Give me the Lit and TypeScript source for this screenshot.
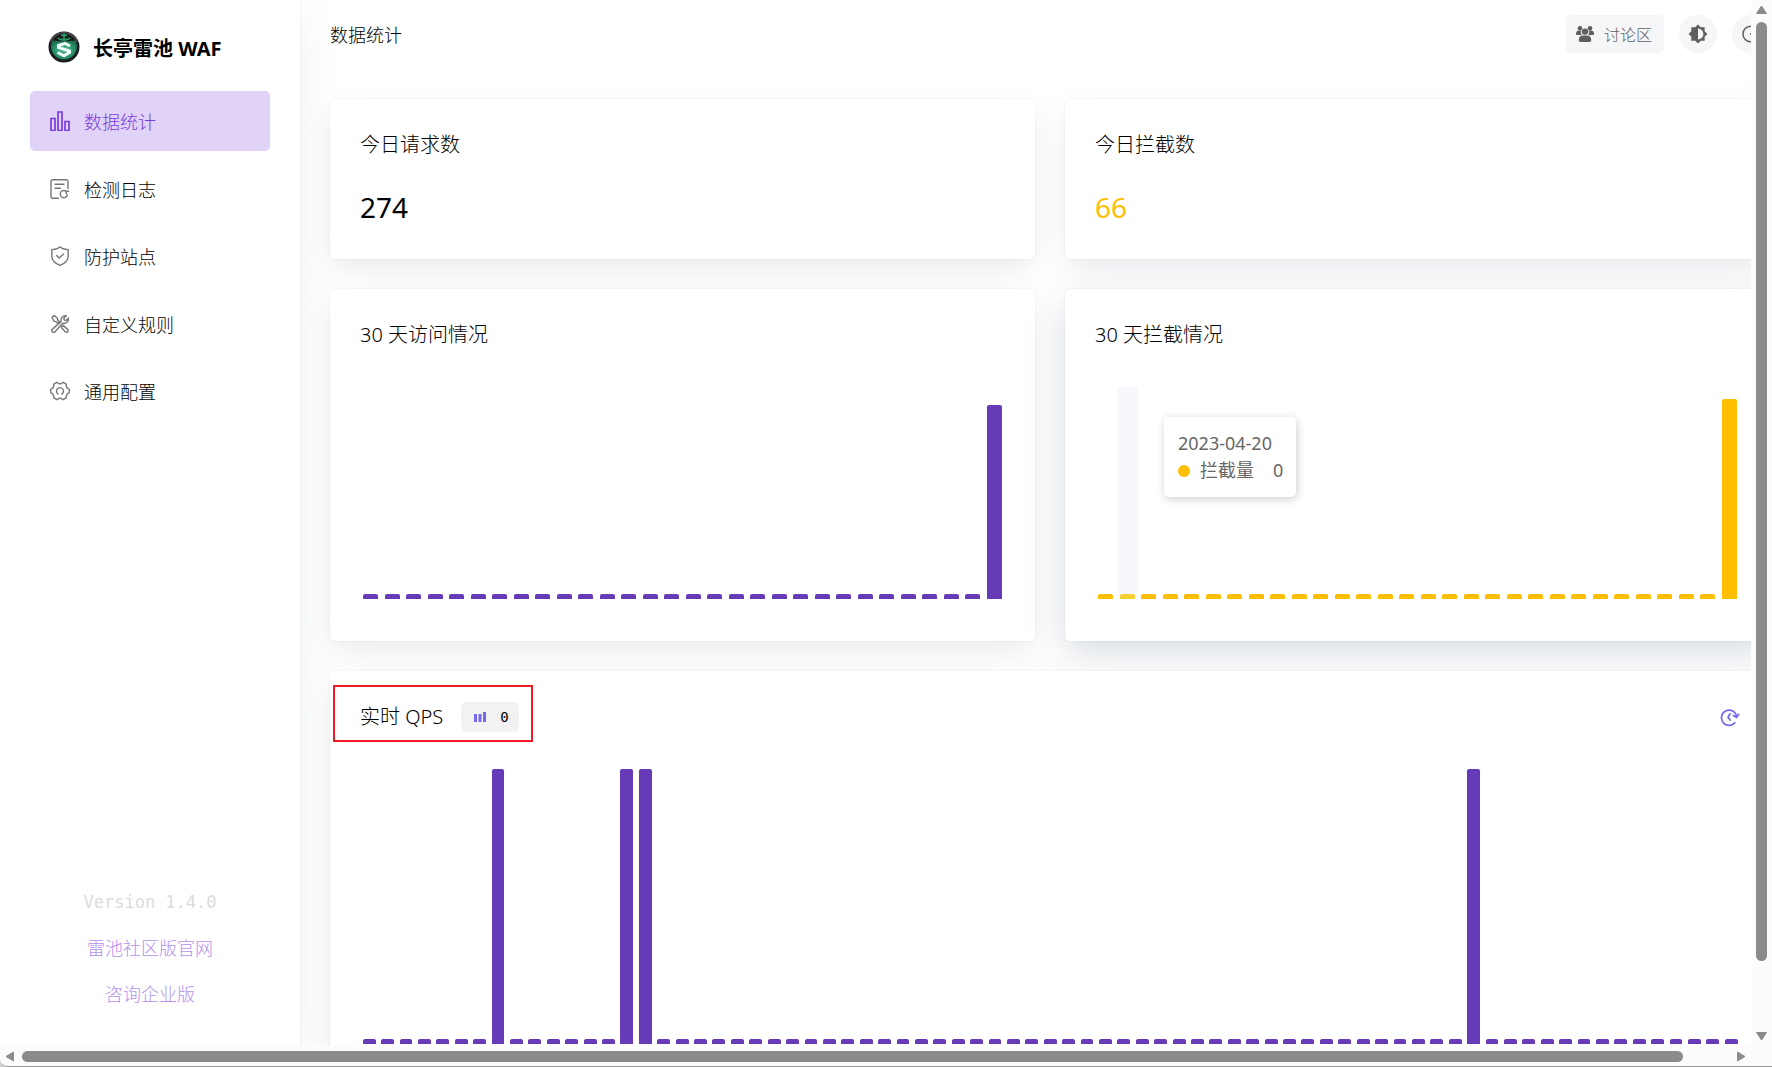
import { LitElement, html, css, svg } from "lit";
import { customElement, property } from "lit/decorators.js";
import { classMap } from "lit/directives/class-map.js";
import { styleMap } from "lit/directives/style-map.js";

const icons = {
  stats: svg`<path d="M1 7.500h4v12H1zM8 1h4v18.500H8zM15 10.500h4v9h-4z" stroke-width="1.700"/>`,
  logs: svg`<path d="M8.500 19.200H2.500a1.500 1.500 0 0 1-1.500-1.500V2.300A1.500 1.500 0 0 1 2.500.8h14A1.500 1.500 0 0 1 18 2.300V9.500M5 5.200h9M5 9.200h5.500"/><path d="M16.500 12.700a3.600 3.600 0 1 0 .8 3.300M18.700 12.200h-2.400v2.600"/>`,
  shield: svg`<path d="M10 .9 12.300 2.300C14 3.100 16 3.500 18.200 3.600V10c0 4.500-3.600 7.600-8.200 9.300C5.400 17.600 1.800 14.500 1.800 10V3.600C4 3.500 6 3.100 7.700 2.300z"/><path d="m6.600 9.600 2.600 2.500 4.400-4.200"/>`,
  tools: svg`<path d="M2 3.200 4 1.400 7.300 4 7.700 6 9.600 8 8 9.500 6 7.600 4 7.300z"/><path d="M2 17.500c-.6-.9-.4-1.700.4-2.400L11 7.600C10.400 4.400 12.600 1 16.300 1.700L13.800 4.300 14.300 6.100 16 6.500 18.500 4c.6 3.600-2.600 6.100-5.900 5.300L5 17.700c-.9 1-2.200.9-3-.2z"/><path d="m11.200 13.300 1.900-1.900 4.600 4c1.600 1.500-.8 3.900-2.400 2.400z"/>`,
  config: svg`<path d="M6.900 1.300 8.300 2.300c1 .6 2.400.6 3.400 0L13.100 1.300 16.200 3.100 16.300 4.900c.1 1.300.7 2.200 1.800 2.800L19.300 8.300V11.700L18.100 12.300c-1.100.6-1.700 1.500-1.800 2.800L16.200 16.900 13.100 18.700 11.700 17.700c-1-.6-2.400-.6-3.400 0L6.900 18.700 3.800 16.900 3.700 15.100C3.600 13.800 3 12.900 1.900 12.300L.7 11.700V8.300L1.900 7.700C3 7.100 3.600 6.200 3.700 4.900L3.800 3.100z"/><path d="M8 13a3.500 3.500 0 1 1 3.800.1"/>`,
};

type IconName = keyof typeof icons;

interface NavItem {
  label: string;
  icon: IconName;
  active?: boolean;
}

const NAV: NavItem[] = [
  { label: "数据统计", icon: "stats", active: true },
  { label: "检测日志", icon: "logs" },
  { label: "防护站点", icon: "shield" },
  { label: "自定义规则", icon: "tools" },
  { label: "通用配置", icon: "config" },
];

/** A series of `count` idle ticks with the given bars raised (percent of plot height). */
const series = (count: number, raised: Record<number, number>) =>
  Array.from({ length: count }, (_, i) => raised[i] ?? 0);

const VISITS = series(30, { 29: 91.5 });
const BLOCKS = series(30, { 29: 94.5 });
const QPS = series(75, { 7: 100, 14: 100, 15: 100, 60: 100 });

@customElement("bar-chart")
export class BarChart extends LitElement {
  @property({ attribute: false }) values: number[] = [];
  @property() label = "";
  @property({ type: Number }) hovered = -1;

  static styles = css`
    :host { display: block; height: 212px; color: #673ab7; }
    .plot { display: flex; height: 100%; }
    .slot { flex: 1; display: flex; align-items: flex-end; justify-content: center; }
    .bar { width: 70%; min-height: 5px; border-radius: 2px 2px 0 0; background: currentColor; }
    .hovered { background: #f7f8fc; }
    .hovered .bar { background: #f6d033; }
  `;

  render() {
    return html`<div class="plot" role="img" aria-label=${this.label}>
      ${this.values.map(
        (v, i) => html`<div class=${classMap({ slot: true, hovered: i === this.hovered })}>
          <div class="bar" style=${styleMap({ height: `${v}%` })}></div>
        </div>`,
      )}
    </div>`;
  }
}

@customElement("side-bar")
export class SideBar extends LitElement {
  static styles = css`
    :host {
      display: flex; flex-direction: column; flex: none; box-sizing: border-box;
      width: 300px; padding: 31px 30px 39px; background: #fff;
      box-shadow: 0 0 2px rgba(145, 158, 171, 0.2), 0 12px 40px -4px rgba(120, 150, 140, 0.16);
    }
    .brand { display: flex; align-items: center; gap: 13px; padding-left: 18px; height: 32px; margin: 0 0 28px; font-size: 20px; font-weight: 700; }
    .logo { width: 32px; height: 32px; }
    .nav { display: flex; flex-direction: column; justify-content: space-between; height: 330px; }
    .item {
      display: flex; align-items: center; gap: 14px; height: 60px; padding: 0 20px;
      border-radius: 5px; color: #000; text-decoration: none; font-size: 18px;
    }
    .icon { width: 20px; height: 20px; fill: none; stroke: #777; stroke-width: 1.4; stroke-linejoin: round; stroke-linecap: round; }
    .active { background: #e1d3f7; color: #7a3cdb; }
    .active .icon { stroke: #7a3cdb; stroke-linejoin: miter; }
    .foot { display: flex; flex-direction: column; align-items: center; gap: 20px; margin-top: auto; font-size: 18px; line-height: 26px; }
    .version { color: #dcdcdc; font: 17px/26px "DejaVu Sans Mono", monospace; }
    .link { color: #b490ec; text-decoration: none; }
  `;

  render() {
    return html`
      <h1 class="brand">
        <svg class="logo" viewBox="0 0 32 32" aria-hidden="true">
          <defs>
            <radialGradient id="g" cx="50%" cy="50%" r="55%">
              <stop offset="0" stop-color="#5bbb95" />
              <stop offset="0.6" stop-color="#2f9a70" />
              <stop offset="1" stop-color="#1c6e4e" />
            </radialGradient>
          </defs>
          <circle cx="16" cy="16" r="15.500" fill="#1b1d20" />
          <path d="M2.500 11A14.500 14.500 0 0 1 29.500 11" fill="none" stroke="#4a4d50" stroke-width="1.500" />
          <path d="M4.500 9.500C8 9.500 11 10.500 16 10.500S24 9.500 27.500 9.500A13 13 0 1 1 4.500 9.500z" fill="url(#g)" />
          <path d="M16 2.500v7M13 4.200h6" stroke="#28a568" stroke-width="1.500" fill="none" />
          <path d="M9 6.500c2 .9 3.500 1.200 7 1.200s5-.3 7-1.200c-.5 2-3 3.200-7 3.200S9.500 8.500 9 6.500z" fill="#28a568" />
          <path d="M22 15 17 12.300 10.500 14.500v2L21.500 20v1.500L16 24.800 9.500 21.500" stroke="#f2fffa" stroke-width="3" fill="none" />
        </svg>
        长亭雷池 WAF
      </h1>
      <nav class="nav">
        ${NAV.map(
          (n) => html`<a href="#" class=${classMap({ item: true, active: !!n.active })}>
            <svg class="icon" viewBox="0 0 20 20" aria-hidden="true">${icons[n.icon]}</svg>${n.label}
          </a>`,
        )}
      </nav>
      <div class="foot">
        <span class="version">Version 1.4.0</span>
        <a class="link" href="#">雷池社区版官网</a>
        <a class="link" href="#">咨询企业版</a>
      </div>
    `;
  }
}

@customElement("scroll-bar")
export class ScrollBar extends LitElement {
  @property({ reflect: true }) axis: "x" | "y" = "y";
  @property({ type: Number }) ratio = 1;

  static styles = css`
    :host { display: flex; background: #fcfcfc; }
    :host([axis="y"]) { flex-direction: column; }
    .arrow { flex: none; width: 21px; height: 21px; fill: #8b8b8b; stroke: #8b8b8b; stroke-linejoin: round; }
    .track { flex: 1; display: flex; }
    :host([axis="y"]) .track { flex-direction: column; padding: 1px 5px; }
    :host([axis="x"]) .track { padding: 5px 1px 4px; }
    .thumb { border-radius: 6px; background: #8b8b8b; }
  `;

  render() {
    const x = this.axis === "x";
    const size = `${this.ratio * 100}%`;
    return html`
      <svg class="arrow" viewBox="0 0 21 21" aria-hidden="true">
        <path d=${x ? "M6 10.500 13.500 6v9z" : "M10.500 6 15.500 13.500h-10z"} />
      </svg>
      <div class="track"><div class="thumb" style=${styleMap(x ? { width: size } : { height: size })}></div></div>
      <svg class="arrow" viewBox="0 0 21 21" aria-hidden="true">
        <path d=${x ? "M15 10.500 7.500 6v9z" : "M10.500 15 15.500 7.500h-10z"} />
      </svg>
    `;
  }
}

@customElement("app-root")
export class AppRoot extends LitElement {
  static styles = css`
    :host {
      display: block; height: 100vh; background: #d2d2d2; color: #000;
      font-family: "Noto Sans", "Noto Sans CJK SC", sans-serif; font-size: 18px; font-weight: 300;
    }
    .window {
      display: grid; grid-template: minmax(0, 1fr) 20px / minmax(0, 1fr) 21px; box-sizing: border-box; height: 100%;
      border-bottom: 1px solid #9a9a9a; border-bottom-left-radius: 8px; background: #fcfcfc; overflow: hidden;
    }
    .view { display: flex; overflow: hidden; background: #fff; }
    .main { flex: 1 0 auto; display: flex; flex-direction: column; box-sizing: border-box; min-width: 1500px; padding: 15px 30px 30px; }
    .top { display: flex; align-items: center; gap: 15px; height: 38px; margin-bottom: 46px; }
    .heading { margin: 0 auto 0 0; font-size: 18px; font-weight: inherit; }
    .btn {
      display: flex; align-items: center; justify-content: center; gap: 10px; height: 38px; padding: 0 12px 0 10px;
      border: 0; border-radius: 5px; background: #f4f6f8; color: #5f5f5f; font: inherit; font-size: 16px; cursor: pointer;
    }
    .round { width: 38px; padding: 0; border-radius: 50%; }
    .glyph { width: 18px; height: 18px; fill: #5f5f5f; }
    .sun { width: 20px; height: 20px; }
    .line { fill: none; stroke: #5f5f5f; stroke-width: 1.500; }
    .cards { display: grid; grid-template-columns: 1fr 1fr; gap: 30px; }
    .card {
      padding: 30px; border-radius: 5px; background: #fff;
      box-shadow: 0 0 2px rgba(145, 158, 171, 0.2), 0 12px 30px -4px rgba(145, 158, 171, 0.24);
    }
    .strong { box-shadow: 0 0 2px rgba(145, 158, 171, 0.2), 0 12px 36px -2px rgba(125, 140, 160, 0.34); }
    .wide { grid-column: 1 / -1; }
    .title { margin: 0; font-size: 20px; font-weight: inherit; line-height: 32px; }
    .value { margin: 26px 0 2px; font-size: 28px; font-weight: 400; line-height: 40px; }
    .warn { color: #ffbf00; }
    .chart { position: relative; margin: 36px 0 12px; }
    .amber { color: #ffbf00; }
    .tall { height: 275px; }
    .tip {
      position: absolute; left: 69px; top: 30px; box-sizing: border-box; padding: 13px 13px 13px 14px; border-radius: 5px;
      background: #fff; color: #666; font-size: 18px; font-weight: 400; line-height: 27px; box-shadow: 1px 2px 10px rgba(0, 0, 0, 0.2);
    }
    .tip-row { display: flex; align-items: center; }
    .dot { width: 12px; height: 12px; margin-right: 10px; border-radius: 50%; background: #ffbf00; }
    .num { margin-left: 19px; }
    .row { display: flex; align-items: center; justify-content: space-between; }
    .group { position: relative; display: flex; align-items: center; gap: 18px; }
    .mark { position: absolute; inset: -16px -14px -9px -27px; border: 2px solid #ed1c24; }
    .chip {
      display: flex; align-items: center; gap: 14px; box-sizing: border-box; height: 30px; padding: 0 10px 0 13px;
      border-radius: 5px; background: #f2f2f2; font: 14px/30px "DejaVu Sans Mono", monospace;
    }
    .mini { width: 12px; height: 12px; fill: #7468f0; }
    .reload { display: flex; padding: 0; border: 0; background: none; cursor: pointer; }
    .reload-icon { width: 20px; height: 20px; fill: none; stroke: #7468f0; stroke-width: 1.700; }
  `;

  render() {
    return html`<div class="window">
      <div class="view">
        <side-bar></side-bar>
        <main class="main">
          <header class="top">
            <h2 class="heading">数据统计</h2>
            <button class="btn" type="button">
              <svg class="glyph" viewBox="0 0 18 18" aria-hidden="true">
                <circle cx="4" cy="3.200" r="2.300" /><circle cx="14" cy="3.200" r="2.300" />
                <path d="M0 8.500c0-2 1.200-3 3-3h2.200C4.500 7.500 5 9 6 10H.8C.3 10 0 9.500 0 8.500zM18 8.500c0-2-1.200-3-3-3h-2.200c.7 2 .2 3.500-.8 4.500h5.200c.5 0 .8-.5.8-1.500z" />
                <circle cx="9" cy="6.600" r="3.200" />
                <path d="M2.800 15c0-3 1.500-4.500 3.700-4.500h5c2.200 0 3.700 1.500 3.700 4.500 0 1.200-.6 2-1.800 2H4.600c-1.200 0-1.800-.8-1.800-2z" />
              </svg>
              讨论区
            </button>
            <button class="btn round" type="button" aria-label="切换主题">
              <svg class="glyph sun" viewBox="0 0 24 24" aria-hidden="true">
                <path d="M20 8.690V4h-4.690L12 .69 8.690 4H4v4.690L.69 12 4 15.310V20h4.690L12 23.310 15.310 20H20v-4.690L23.310 12 20 8.690zM12 18.500v-13a6.500 6.500 0 0 1 0 13z" />
              </svg>
            </button>
            <button class="btn round" type="button" aria-label="退出">
              <svg class="glyph line" viewBox="0 0 18 18" aria-hidden="true">
                <path d="M14 3.200a7.800 7.800 0 1 0 0 11.600M8 9h9M14.500 6.500 17 9l-2.500 2.500" />
              </svg>
            </button>
          </header>
          <div class="cards">
            <section class="card"><h3 class="title">今日请求数</h3><p class="value">274</p></section>
            <section class="card"><h3 class="title">今日拦截数</h3><p class="value warn">66</p></section>
            <section class="card">
              <h3 class="title">30 天访问情况</h3>
              <div class="chart"><bar-chart .values=${VISITS} label="30 天访问情况"></bar-chart></div>
            </section>
            <section class="card strong">
              <h3 class="title">30 天拦截情况</h3>
              <div class="chart">
                <bar-chart class="amber" .values=${BLOCKS} .hovered=${1} label="30 天拦截情况"></bar-chart>
                <div class="tip" role="tooltip">
                  <div>2023-04-20</div>
                  <div class="tip-row"><span class="dot"></span>拦截量<span class="num">0</span></div>
                </div>
              </div>
            </section>
            <section class="card wide">
              <div class="row">
                <div class="group">
                  <h3 class="title">实时 QPS</h3>
                  <span class="chip">
                    <svg class="mini" viewBox="0 0 12 12" aria-hidden="true">
                      <path d="M0 3h3v8H0zM4.500 3h3v8h-3zM9 1h3v10H9z" />
                    </svg>0
                  </span>
                  <div class="mark"></div>
                </div>
                <button class="reload" type="button" aria-label="刷新">
                  <svg class="reload-icon" viewBox="0 0 20 20" aria-hidden="true">
                    <path d="M15.200 15.200A7.600 7.600 0 1 1 16.600 9.500M12.800 8.300 16.600 10.300 19 6.800M10.500 6.200 8 10l2.500 3.800" />
                  </svg>
                </button>
              </div>
              <div class="chart"><bar-chart class="tall" .values=${QPS} label="实时 QPS"></bar-chart></div>
            </section>
          </div>
        </main>
      </div>
      <scroll-bar axis="y" .ratio=${0.937}></scroll-bar>
      <scroll-bar axis="x" .ratio=${0.973}></scroll-bar>
    </div>`;
  }
}
